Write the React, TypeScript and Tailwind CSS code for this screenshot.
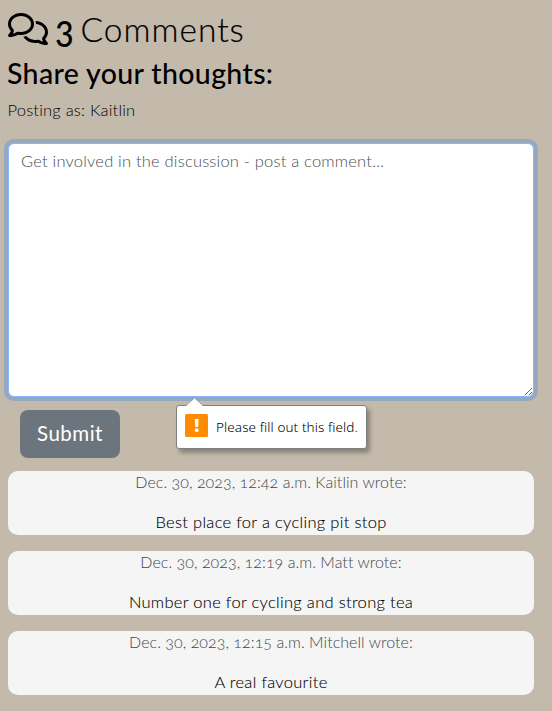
import { FaRegComments } from "react-icons/fa6";

const comments = [
  { meta: "Dec. 30, 2023, 12:42 a.m. Kaitlin wrote:", body: "Best place for a cycling pit stop" },
  { meta: "Dec. 30, 2023, 12:19 a.m. Matt wrote:", body: "Number one for cycling and strong tea" },
  { meta: "Dec. 30, 2023, 12:15 a.m. Mitchell wrote:", body: "A real favourite" },
];

function ValidationBubble() {
  return (
    <div className="absolute left-[176px] top-[405px] flex h-11 w-[191px] items-center rounded-[3px] border border-[#808080] bg-white pl-2 shadow-[3px_4px_4px_rgba(0,0,0,0.3)]">
      <svg className="absolute -top-[8px] left-[9px]" width="17" height="9" viewBox="0 0 17 9">
        <path d="M0 9V8L8.5 0L17 8V9Z" fill="#fff" />
        <path d="M0 7.5L8.5 0L17 7.5" fill="none" stroke="#909090" strokeWidth=".7" />
      </svg>
      <svg className="-mt-[3px] shrink-0" width="23" height="23" viewBox="0 0 23 23">
        <rect width="23" height="23" rx="1.5" fill="#ff8c00" />
        <path d="M9.8 5h3.8l-.5 8h-2.8z" fill="#fff" />
        <circle cx="11.7" cy="16.2" r="1.9" fill="#fff" />
      </svg>
      <span className="ml-2 mt-px whitespace-nowrap font-['Noto_Sans',sans-serif] text-[13.5px] tracking-[0.1px] text-black">
        Please fill out this field.
      </span>
    </div>
  );
}

export default function App() {
  return (
    <main className="relative h-[711px] w-[552px] overflow-hidden bg-[#c4baac] pl-2 pr-[18px] pt-[10px] font-['Lato',sans-serif] font-light text-black [font-variant-numeric:oldstyle-nums]">
      <h2 className="flex h-[38px] items-center whitespace-nowrap text-[33.5px] leading-[38px]">
        <FaRegComments className="-ml-[0.5px] -mt-px h-8 w-10 shrink-0" />
        <span className="ml-[7.5px] w-[25.5px] origin-bottom scale-y-110 text-[35px] font-medium">3</span>
        <span className="-mt-px tracking-[1px] [-webkit-text-stroke:0.2px_black]">Comments</span>
      </h2>
      <h3 className="-ml-px mt-2 h-[34px] whitespace-nowrap text-[28.5px] font-medium leading-[34px] tracking-[0.35px]">Share your thoughts:</h3>
      <p className="-ml-px mt-2 h-6 pl-[0.5px] text-[16.5px] leading-6 tracking-[0.2px]">Posting as: Kaitlin</p>
      <textarea
        className="mt-[21px] block h-[254px] w-[526px] resize rounded-md border border-[#86b7fe] bg-white px-3 pb-1.5 pt-[5px] text-[16.5px] leading-6 tracking-[0.2px] shadow-[0_0_0_4px_rgba(13,110,253,0.25)] outline-none placeholder:text-[#4c4f52]"
        placeholder="Get involved in the discussion - post a comment..."
      />
      <button className="ml-3 mt-[13px] block h-12 w-[100px] rounded-lg bg-[#6c757d] pb-0.5 text-[20.5px] font-normal tracking-[0.5px] text-white">
        Submit
      </button>
      <section className="mt-[13px] flex flex-col gap-4">
        {comments.map((c) => (
          <article key={c.meta} className="h-16 rounded-[10px] bg-[#f5f5f5] text-center leading-[22px]">
            <p className="h-6 text-base leading-[22px] tracking-[0.05px] text-[#43474b]">{c.meta}</p>
            <p className="mt-4 h-6 text-[16.5px] tracking-[0.3px] [-webkit-text-stroke:0.1px_black]">{c.body}</p>
          </article>
        ))}
      </section>
      <ValidationBubble />
    </main>
  );
}
